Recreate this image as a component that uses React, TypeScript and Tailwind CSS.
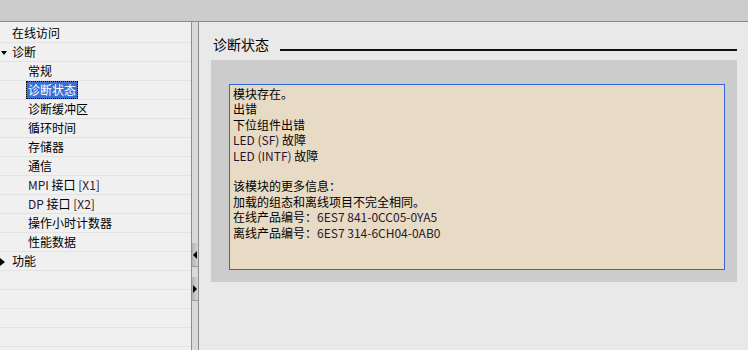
import React from 'react';

type TreeItem = { label: React.ReactNode; level: 0 | 1; caret?: 'down' | 'right'; selected?: boolean };

const latin = (s: string) => <span className="text-[#2a1530]">{s}</span>;

const treeItems: TreeItem[] = [
  { label: '在线访问', level: 0 },
  { label: '诊断', level: 0, caret: 'down' },
  { label: '常规', level: 1 },
  { label: '诊断状态', level: 1, selected: true },
  { label: '诊断缓冲区', level: 1 },
  { label: '循环时间', level: 1 },
  { label: '存储器', level: 1 },
  { label: '通信', level: 1 },
  { label: <>{latin('MPI')} 接口 {latin('[X1]')}</>, level: 1 },
  { label: <>{latin('DP')} 接口 {latin('[X2]')}</>, level: 1 },
  { label: '操作小时计数器', level: 1 },
  { label: '性能数据', level: 1 },
  { label: '功能', level: 0, caret: 'right' },
  { label: '', level: 0 },
  { label: '', level: 0 },
  { label: '', level: 0 },
  { label: '', level: 0 },
];

const statusLines: React.ReactNode[] = [
  '模块存在。',
  '出错',
  '下位组件出错',
  <>{latin('LED (SF)')} 故障</>,
  <>{latin('LED (INTF)')} 故障</>,
  '\u00a0',
  '该模块的更多信息：',
  '加载的组态和离线项目不完全相同。',
  <>在线产品编号：{latin('6ES7 841-0CC05-0YA5')}</>,
  <>离线产品编号：{latin('6ES7 314-6CH04-0AB0')}</>,
];

const Caret: React.FC<{ dir: 'down' | 'right' }> = ({ dir }) =>
  dir === 'down' ? (
    <span className="absolute left-[1px] top-[8px] h-0 w-0 border-x-[3px] border-t-[4px] border-x-transparent border-t-black" />
  ) : (
    <span className="absolute left-0 top-[6px] h-0 w-0 border-y-[4px] border-l-[5px] border-y-transparent border-l-black" />
  );

const Tree: React.FC = () => (
  <div className="w-[191px] shrink-0 bg-[#f0f0f0] pt-[2px]">
    {treeItems.map((item, i) => (
      <div
        key={i}
        className="relative flex h-[19px] items-center border-b border-[#e3e3e3] text-[12px] leading-[18px] text-black"
      >
        {item.caret && <Caret dir={item.caret} />}
        <div className={item.level === 0 ? 'pl-[12px]' : 'pl-[26px]'}>
          {item.selected ? (
            <span className="block border border-dotted border-black bg-[#3b6fd6] px-[1px] leading-[16px] text-white">
              {item.label}
            </span>
          ) : (
            <span className={item.level === 1 ? 'pl-[2px]' : ''}>{item.label}</span>
          )}
        </div>
      </div>
    ))}
  </div>
);

const SplitButton: React.FC<{ dir: 'left' | 'right' }> = ({ dir }) => (
  <div className="flex h-[24px] items-center justify-center border-b border-[#9a9a9a] bg-gradient-to-r from-[#b4b4b4] to-[#d6d6d6]">
    {dir === 'left' ? (
      <span className="h-0 w-0 border-y-[4px] border-r-[4px] border-y-transparent border-r-black" />
    ) : (
      <span className="h-0 w-0 border-y-[4px] border-l-[4px] border-y-transparent border-l-black" />
    )}
  </div>
);

const Splitter: React.FC = () => (
  <div className="flex w-[8px] shrink-0 flex-col gap-[10px] border-x border-[#8c8c8c] bg-[#d9d9d9] pt-[221px]">
    <SplitButton dir="left" />
    <SplitButton dir="right" />
  </div>
);

const App: React.FC = () => (
  <div
    className="flex h-[350px] w-[748px] flex-col overflow-hidden bg-[#e9e9e9]"
    style={{ fontFamily: '"Noto Sans CJK SC", "Noto Sans", sans-serif' }}
  >
    <div className="h-[22px] shrink-0 border-b border-[#8a8a8a] bg-[#cccccc]" />
    <div className="flex min-h-0 flex-1">
      <Tree />
      <Splitter />
      <div className="flex-1 pl-[12px] pr-[11px]">
        <div className="mt-[12px] flex h-[20px] items-start">
          <span className="ml-[2px] text-[14px] leading-[20px] text-black">诊断状态</span>
          <div className="ml-[11px] mt-[15px] h-[2px] flex-1 bg-[#111]" />
        </div>
        <div className="mt-[6px] bg-[#cccccc] pb-[12px] pl-[18px] pr-[12px] pt-[24px]">
          <div className="h-[186px] border border-[#3366dd] bg-[#e8dbc5] pl-[3px] pt-[1px] text-[12px] leading-[15.4px] text-black">
            {statusLines.map((line, i) => (
              <div key={i}>{line}</div>
            ))}
          </div>
        </div>
      </div>
    </div>
  </div>
);

export default App;
